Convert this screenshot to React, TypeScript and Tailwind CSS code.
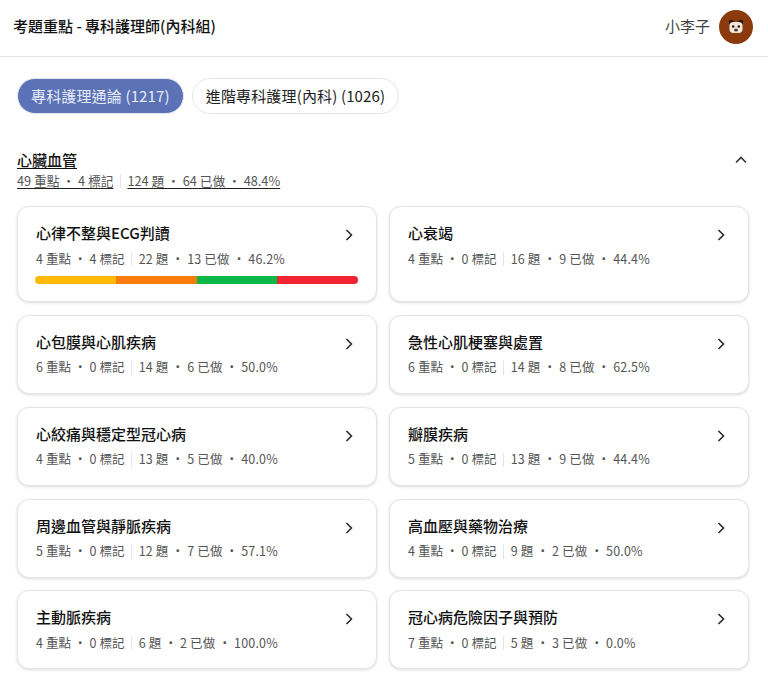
const font = '"Noto Sans CJK TC", "Noto Sans", sans-serif';

type Topic = { title: string; a: number; b: number; c: number; d: number; e: string; bar?: boolean };

const topics: Topic[][] = [
  [
    { title: '心律不整與ECG判讀', a: 4, b: 4, c: 22, d: 13, e: '46.2%', bar: true },
    { title: '心衰竭', a: 4, b: 0, c: 16, d: 9, e: '44.4%', bar: true },
  ],
  [
    { title: '心包膜與心肌疾病', a: 6, b: 0, c: 14, d: 6, e: '50.0%' },
    { title: '急性心肌梗塞與處置', a: 6, b: 0, c: 14, d: 8, e: '62.5%' },
  ],
  [
    { title: '心絞痛與穩定型冠心病', a: 4, b: 0, c: 13, d: 5, e: '40.0%' },
    { title: '瓣膜疾病', a: 5, b: 0, c: 13, d: 9, e: '44.4%' },
  ],
  [
    { title: '周邊血管與靜脈疾病', a: 5, b: 0, c: 12, d: 7, e: '57.1%' },
    { title: '高血壓與藥物治療', a: 4, b: 0, c: 9, d: 2, e: '50.0%' },
  ],
  [
    { title: '主動脈疾病', a: 4, b: 0, c: 6, d: 2, e: '100.0%' },
    { title: '冠心病危險因子與預防', a: 7, b: 0, c: 5, d: 3, e: '0.0%' },
  ],
];

function Chevron() {
  return (
    <svg width="24" height="24" viewBox="0 0 24 24" fill="none" stroke="#2a2a2a" strokeWidth="1.6" className="shrink-0 mt-[4px]">
      <path d="M9.5 7 14.5 12 9.5 17" />
    </svg>
  );
}

function Card({ t, first }: { t: Topic; first: boolean }) {
  return (
    <div className="flex-1 min-w-0 rounded-xl border border-[#e5e5e5] bg-white shadow-[0_1px_3px_rgba(0,0,0,0.14)] pl-[18px] pr-[15px] pt-[11px] pb-[15px]">
      <div className="flex items-center justify-between h-[30px]">
        <span className="text-[15px] leading-[22px] font-medium text-[#111]">{t.title}</span>
        <Chevron />
      </div>
      <div className="flex items-center mt-[1px] h-[20px] text-[12.5px] text-[#555] whitespace-pre">
        <span className="tracking-[0.1px]">{`${t.a} 重點 ・ ${t.b} 標記`}</span>
        <span className="w-px h-[14px] bg-[#e5e5e5] mx-[6.5px]" />
        <span className="tracking-[0.17px]">{`${t.c} 題 ・ ${t.d} 已做 ・ ${t.e}`}</span>
      </div>
      {t.bar && (
        first ? (
          <div className="flex h-2 mt-[7px] mb-[2px] -ml-px mr-[3px] rounded-full overflow-hidden">
            <div className="flex-1 bg-[#ffb90a]" />
            <div className="flex-1 bg-[#f97c0c]" />
            <div className="flex-1 bg-[#0cb84a]" />
            <div className="flex-1 bg-[#f0252f]" />
          </div>
        ) : (
          <div className="h-2 mt-[7px] mb-[2px]" />
        )
      )}
    </div>
  );
}

export default function App() {
  return (
    <div className="w-[768px] h-[677px] overflow-hidden bg-white" style={{ fontFamily: font }}>
      <header className="h-[57px] border-b border-[#e2e2e2] flex items-center justify-between pl-[13px] pr-[15px] pb-[3px]">
        <h1 className="text-[15px] font-medium text-[#111]">考題重點 - 專科護理師(內科組)</h1>
        <div className="flex items-center gap-[9px]">
          <span className="text-[15px] text-[#444]">小李子</span>
          <div className="w-[34px] h-[34px] rounded-full bg-[#8b3a0e] flex items-center justify-center">
            <svg width="20" height="20" viewBox="0 0 20 20">
              <rect x="3" y="3" width="4.5" height="4" rx="1" fill="#2a1a12" />
              <rect x="12.5" y="3" width="4.5" height="4" rx="1" fill="#2a1a12" />
              <rect x="3.5" y="5" width="13" height="11" rx="4" fill="#f3e7dc" />
              <circle cx="7.2" cy="9.5" r="1.3" fill="#2a1a12" />
              <circle cx="12.8" cy="9.5" r="1.3" fill="#2a1a12" />
              <ellipse cx="10" cy="13" rx="2" ry="1.6" fill="#5a3a2a" />
            </svg>
          </div>
        </div>
      </header>

      <div className="flex gap-2 pl-[17px] pt-[21px]">
        <div className="h-[36px] px-[13px] rounded-full bg-[#5b72b6] border border-[#e5e7f0] flex items-center text-[15px] tracking-[0.15px] text-[#e8ecf7]">
          專科護理通論 (1217)
        </div>
        <div className="h-[36px] px-[13px] rounded-full bg-white border border-[#e5e5e5] flex items-center text-[15px] tracking-[0.15px] text-[#222]">
          進階專科護理(內科) (1026)
        </div>
      </div>

      <div className="flex items-start justify-between pl-[17px] pr-[18px] mt-[35px]">
        <div>
          <div className="text-[15px] leading-[22px] font-medium text-[#111] underline underline-offset-2">心臟血管</div>
          <div className="flex items-center text-[12.75px] leading-[18px] text-[#555] whitespace-pre mt-[1px]">
            <span className="underline decoration-[#222] underline-offset-2">49 重點 ・ 4 標記</span>
            <span className="w-px h-[14px] bg-[#e5e5e5] mx-[6.5px]" />
            <span className="underline decoration-[#222] underline-offset-2">124 題 ・ 64 已做 ・ 48.4%</span>
          </div>
        </div>
        <svg width="24" height="24" viewBox="0 0 24 24" fill="none" stroke="#333" strokeWidth="1.6" className="-mt-[1px] -mr-[3px]">
          <path d="M7 14.5 12 9.5 17 14.5" />
        </svg>
      </div>

      <div className="flex flex-col gap-[12.85px] pl-[17px] pr-[19px] mt-[16px]">
        {topics.map((row, i) => (
          <div key={i} className="flex gap-[12px]">
            {row.map((t, j) => (
              <Card key={j} t={t} first={i === 0 && j === 0} />
            ))}
          </div>
        ))}
      </div>
    </div>
  );
}
